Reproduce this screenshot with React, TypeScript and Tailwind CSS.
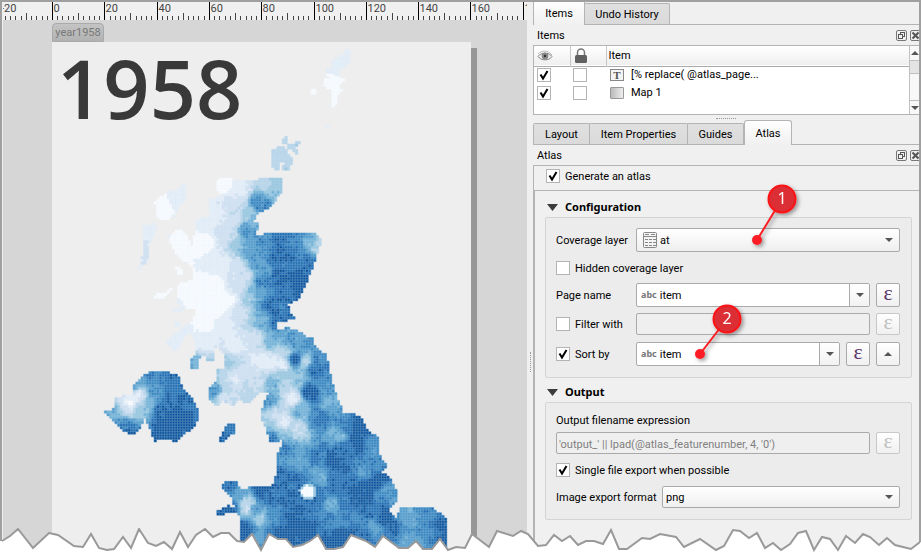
import React from "react";

const BLUES = ["#f7fbff", "#e4eff9", "#d3e3f3", "#bad6eb", "#9ac8e0", "#73b2d8", "#529dcc", "#3585bf", "#1d6cb1", "#08519c"];

// Outline of the cells in each class
const GRID = ["#f5f9fd", "#e2edf7", "#d0e0f0", "#bed8eb", "#a9cfe4", "#8fc0de", "#7ab1d6", "#6ba4d0", "#5f97c8", "#5488bb"];

// Coastlines of the map, as x,y pairs in layout pixels
const COASTS = [
  "218,180 227,177 233,180 252,181 265,178 283,177 283,192 270,207 258,213 253,222 259,223 257,232 252,237 260,236 268,232 295,232 313,232 322,240 318,253 313,267 308,280 298,300 288,305 290,312 295,318 278,323 275,331 287,328 297,330 305,336 312,337 315,347 327,355 330,373 335,390 343,412 360,416 368,430 379,438 378,453 388,467 380,472 390,477 397,493 397,500 388,510 396,517 401,507 432,507 445,517 448,527 447,552 238,552 241,520 238,512 228,512 222,517 218,515 218,511 228,506 236,507 232,503 232,497 222,487 227,480 237,481 237,485 245,490 252,486 272,487 277,473 278,453 283,443 280,438 277,443 270,442 265,427 260,417 265,400 270,393 262,392 248,403 238,400 233,407 222,400 217,407 208,397 208,388 217,380 218,370 225,367 223,352 213,346 213,361 206,361 204,352 199,360 199,368 190,370 190,363 195,354 195,340 190,333 183,328 192,322 197,310 180,310 177,293 178,285 192,280 192,268 186,262 177,255 168,237 177,230 183,230 192,245 195,233 197,220 212,215 208,208 210,198 217,198 223,195 218,190",
  "155,202 167,192 178,190 185,182 186,198 178,208 173,217 163,221 157,215",
  "152,223 157,227 150,243 148,262 142,267 135,278 142,263 143,227",
  "153,295 165,293 172,287 172,290 162,299 153,299",
  "173,266 181,266 183,276 178,273",
  "167,343 175,333 190,327 185,337 178,350 174,352",
  "171,309 182,309 182,312 174,312",
  "174,322 180,322 180,326 174,326",
  "273,149 285,146 287,154 294,158 289,171 282,171 283,166 286,162 279,162 280,171 275,171 271,162",
  "284,135 288,138 288,144 283,143",
  "288,145 296,142 301,139 301,142 294,148 288,149",
  "293,149 299,149 299,154 294,153",
  "346,49 349,49 349,62 343,69 339,67 340,79 346,80 339,84 343,92 338,94 337,104 333,107 333,91 323,86 323,78 330,79 325,71 326,67 332,67 330,63 338,57 343,55",
  "312,90 315,90 315,93 312,93",
  "326,125 328,125 328,128 326,128",
  "116,398 132,394 132,387 147,373 162,370 178,375 185,392 192,398 197,407 199,416 195,427 183,435 175,443 167,438 155,441 148,425 145,417 138,432 132,435 122,430 105,412 116,408",
  "228,423 236,423 235,432 223,443 218,443 221,435",
].map((line) => line.split(" ").map((p) => p.split(",").map(Number)));

// Measured values: x, y, class (0 light to 9 dark)
const SAMPLES = (
  "333,90,0 342,62,1 285,155,3 225,185,0 240,190,1 265,182,3 275,188,4 260,203,7 235,203,2 215,215,1 235,220,2 250,215,4 247,230,6 230,235,2 238,245,4 205,245,0 182,245,0 215,262,1 235,265,2 250,250,6 265,242,6.5 280,238,8 295,240,7 310,240,5 318,245,3 275,255,8 290,260,8 305,265,8 258,265,6 245,275,2 262,280,7 280,280,8 298,283,9 260,295,5 250,300,4 270,305,8 288,295,8 205,285,0 220,285,0 190,298,0 215,310,0 235,285,2 240,312,2 225,325,1 205,325,0 262,318,5 275,320,8 288,318,8 205,340,1 196,367,5 235,345,1 255,340,2 272,340,5 290,338,5.5 300,345,6 275,362,1 262,360,1 245,375,2 228,364,4 230,385,3 235,380,1 212,390,6 225,400,2 248,390,3 255,385,2 285,352,3 282,375,4 295,360,9 305,362,3 283,365,1 293,398,1 282,385,3 300,380,4 315,370,8 310,392,9 325,385,6.5 330,402,5 300,410,5 320,418,8 283,422,1 275,415,2.5 268,400,6 270,425,4 298,430,2.5 285,435,4 273,440,8 275,385,5 338,435,4.5 345,425,7 360,425,9 358,443,9 370,445,6.5 333,460,9 320,455,7.5 300,455,6 285,460,6 365,470,6 380,465,7 345,450,7.5 290,480,8 320,478,5 335,485,8 360,490,9 378,480,9 387,492,6.5 345,505,8 332,506,5 370,510,8 290,510,8.5 300,530,9 330,520,7 350,515,7 340,540,9 375,527,5.5 385,520,9 395,530,8 408,518,5.5 425,515,7 430,530,7 443,525,9 410,540,5.5 360,535,8 " +
  "230,485,8 245,502,3 247,507,2 240,495,6 262,490,8.5 275,500,8 262,518,4 255,510,6 275,515,7 245,530,9 260,540,6 280,535,9 232,508,9 270,525,7 285,450,7 283,475,8 303,500,8 298,491,8 316,493,8 310,335,7 322,358,7 230,300,0 225,265,1 " +
  "130,403,0 138,395,1 125,395,2 127,410,2 115,412,5 140,410,4 125,425,7 135,385,5 150,375,7 170,378,8 155,392,6.5 150,405,5 175,395,8 160,410,8.5 175,415,9 165,430,9 190,405,8 185,425,9 128,432,9 228,430,8 " +
  "165,205,0 182,190,1 175,200,1 150,235,1 145,250,2 137,275,1 160,295,0 177,270,0 178,340,1 177,310,1"
)
  .split(" ")
  .map((p) => p.split(",").map(Number));

const CELL = 2.615;

function inside(poly: number[][], x: number, y: number) {
  let hit = false;
  for (let i = 0, j = poly.length - 1; i < poly.length; j = i++) {
    const [ax, ay] = poly[i];
    const [bx, by] = poly[j];
    if (ay > y !== by > y && x < ((bx - ax) * (y - ay)) / (by - ay) + ax) hit = !hit;
  }
  return hit;
}

function noise(a: number, b: number) {
  const n = Math.sin(a * 127.1 + b * 311.7) * 43758.5453;
  return n - Math.floor(n);
}

function buildCells() {
  const paths = BLUES.map(() => "");
  for (let row = 0; row < 196; row++) {
    for (let col = 0; col < 160; col++) {
      const x = 52 + col * CELL;
      const y = 42 + row * CELL;
      const cx = x + CELL / 2;
      const cy = y + CELL / 2;
      if (!COASTS.some((c) => inside(c, cx, cy))) continue;
      let sum = 0;
      let total = 0;
      for (const [sx, sy, v] of SAMPLES) {
        const d = (sx - cx) ** 2 + (sy - cy) ** 2 + 12;
        const w = 1 / (d * d);
        sum += w * v;
        total += w;
      }
      let value = sum / total;
      const patch = noise(Math.floor(col / 3), Math.floor(row / 3)) - 0.5;
      if (value > 4) value += 0.3 + patch * 1.1;
      value += (noise(col, row) - 0.5) * (value > 1.2 ? 1 : 0.3);
      const city = Math.hypot(cx - 307.5, cy - 491.5);
      if (city < 6.5) value = 0;
      else if (city < 8.5) value = 4;
      const k = Math.max(0, Math.min(9, Math.round(value)));
      paths[k] += `M${x.toFixed(2)} ${y.toFixed(2)}h${CELL}v${CELL}h-${CELL}z`;
    }
  }
  return paths;
}

const CELLS = buildCells();

const TORN =
  "2,541 10,536 18,529 33,548 49,533 58,535 74,546 83,547 91,534 99,548 107,550 114,549 123,537 131,548 139,529 148,543 156,546 164,542 172,549 180,532 188,547 196,535 205,529 213,537 221,533 229,533 237,541 244,542 252,534 261,550 269,534 278,539 286,539 293,547 302,545 310,541 318,535 326,549 334,549 343,547 351,535 366,541 375,547 383,536 399,548 408,548 416,541 423,549 432,549 440,539 448,550 456,547 465,548 472,534 489,547 497,531 513,536 521,531 528,534 538,546 546,545 554,535 562,541 570,536 578,545 586,541 594,541 603,544 611,530 619,549 627,549 642,538 650,539 660,534 676,537 684,547 700,539 716,550 724,546 733,530 740,531 749,538 757,533 765,548 773,543 781,550 790,544 798,533 806,531 814,550 822,537 830,539 838,550 846,536 855,543 863,534 870,537 879,545 887,538 895,545 903,547 911,549 920,542";

function TornEdge() {
  return (
    <svg className="pointer-events-none absolute bottom-0 left-0 h-[24px] w-full" viewBox="0 528 921 24" preserveAspectRatio="none" aria-hidden="true">
      <polygon points={`0,541 ${TORN} 921,542 921,553 0,553`} fill="#fff" />
      <polyline points={TORN} fill="none" stroke="#999" strokeWidth="2" />
    </svg>
  );
}

function Ruler() {
  const ticks: React.ReactNode[] = [];
  const last = (window.innerWidth - 443) / CELL;
  for (let u = -18; u <= last; u += 2) {
    const x = Math.round(49 + u * CELL) + 0.5;
    const top = u % 20 === 0 ? 0 : u % 10 === 0 ? 11 : 14;
    ticks.push(<line key={u} x1={x} x2={x} y1={top} y2={18} stroke={top === 0 ? "#000" : "#444"} />);
    if (u % 20 === 0) {
      ticks.push(
        <text key={`t${u}`} x={x + 1} y={10} fill="#444">
          {u}
        </text>
      );
    }
  }
  return (
    <svg className="h-[18px] w-full shrink-0 bg-[#f0f0f0] text-[11px]" aria-label="Horizontal ruler">
      <text x={-2} y={10} fill="#444">
        -20
      </text>
      {ticks}
    </svg>
  );
}

function LayoutCanvas() {
  return (
    <section className="flex min-w-0 flex-1 flex-col overflow-hidden bg-[#d6d6d6]">
      <Ruler />
      <div className="flex-1 pt-[3px] pl-[49px]">
        <div className="flex h-[19px] w-[52px] items-center justify-center rounded-t border border-[#aaa] bg-linear-to-b from-[#c4c4c4] to-[#b2b2b2] text-[11px] text-[#777]">year1958</div>
        <div className="relative h-[520px] w-[419px] bg-[#eee] shadow-[6px_6px_0_#979797]">
          <svg className="absolute inset-0 h-[510px] w-full" viewBox="52 42 419 510" role="img" aria-label="Map 1">
            {CELLS.map((d, i) => (
              <path key={i} d={d} fill={BLUES[i]} stroke={GRID[i]} strokeWidth={0.5} />
            ))}
          </svg>
          <h1 className="relative pt-px pl-[5px] font-['Open_Sans',sans-serif] text-[81px] leading-[90px] font-semibold text-[#393939]">1958</h1>
        </div>
      </div>
    </section>
  );
}

function DockTab({ label, active, width }: { label: string; active?: boolean; width: string }) {
  return (
    <button
      role="tab"
      aria-selected={!!active}
      className={`${width} whitespace-nowrap border border-b-0 border-[#b4b4b4] pt-px text-center ${
        active ? "relative -mb-px h-[25px] rounded-t-[3px] bg-linear-to-b from-white to-[#f0f0f0]" : "-ml-px h-[21px] rounded-t-[2px] bg-linear-to-b from-[#e0e0e0] to-[#dadada]"
      }`}
    >
      {label}
    </button>
  );
}

function DockTitle({ title }: { title: string }) {
  return (
    <div className="flex h-5 items-center justify-between pl-1">
      <h2 className="pt-[2px]">{title}</h2>
      <div className="-mr-[2px] flex gap-[3px]">
        <button aria-label="Float" className="flex size-[11px] items-center justify-center rounded-[2px] border border-[#777]">
          <svg className="size-[9px]" viewBox="0 0 9 9" fill="none" stroke="#555">
            <rect x="3.5" y="1.5" width="4" height="4" />
            <rect x="1.5" y="3.5" width="4" height="4" fill="#f0f0f0" />
          </svg>
        </button>
        <button aria-label="Close" className="flex size-[11px] items-center justify-center rounded-[2px] border border-[#777]">
          <svg className="size-[9px]" viewBox="0 0 9 9" stroke="#555" strokeWidth="2">
            <path d="M1.5 1.5l6 6M7.5 1.5l-6 6" />
          </svg>
        </button>
      </div>
    </div>
  );
}

function Tick({ label, id, checked, hideLabel }: { label: string; id: string; checked?: boolean; hideLabel?: boolean }) {
  return (
    <div className="flex items-center gap-[5px]">
      <span className="grid size-[14px] shrink-0">
        <input
          id={id}
          type="checkbox"
          defaultChecked={checked}
          aria-label={hideLabel ? label : undefined}
          className="peer col-start-1 row-start-1 size-[14px] appearance-none border border-[#b4b4b4] bg-white"
        />
        <svg className="pointer-events-none invisible col-start-1 row-start-1 size-[14px] peer-checked:visible" viewBox="0 0 14 14" fill="none" stroke="#000" strokeWidth="2">
          <path d="M3.5 6.5L6 10.5L10.5 3" />
        </svg>
      </span>
      {!hideLabel && (
        <label htmlFor={id} className="pt-[2px]">
          {label}
        </label>
      )}
    </div>
  );
}

function Arrow({ up }: { up?: boolean }) {
  return (
    <svg className="h-1 w-[8px]" viewBox="0 0 8 4" aria-hidden="true">
      <path d={up ? "M0 4L4 0L8 4z" : "M0 0L4 4L8 0z"} fill="#555" />
    </svg>
  );
}

function ExpressionButton({ disabled }: { disabled?: boolean }) {
  return (
    <button
      aria-label="Expression"
      disabled={disabled}
      className="flex h-6 w-6 shrink-0 items-center justify-center rounded-[2px] border border-[#aaa] bg-linear-to-b from-white to-[#f0f0f0] font-['Liberation_Serif',serif] text-[22px] leading-[20px] text-[#5a3768] disabled:h-[22px] disabled:border-[#c8c8c8] disabled:text-[#c0c0c0]"
    >
      <span className="-mt-1">ε</span>
    </button>
  );
}

function FieldCombo({ id, value }: { id: string; value: string }) {
  return (
    <div className="flex h-6 min-w-0 flex-1 items-center overflow-hidden rounded-[2px] border border-[#aaa] bg-white">
      <span className="pl-1 font-['Noto_Sans',sans-serif] text-[9px] leading-4 font-bold text-[#777]" aria-hidden="true">
        abc
      </span>
      <input id={id} defaultValue={value} className="min-w-0 flex-1 pt-[2px] pl-[3px] outline-none" />
      <button aria-label="Show fields" className="flex h-full w-5 items-center justify-center border-l border-[#aaa] bg-linear-to-b from-white to-[#f2f2f2]">
        <Arrow />
      </button>
    </div>
  );
}

function GroupTitle({ title }: { title: string }) {
  return (
    <h3 className="flex h-5 items-center gap-[7px] pl-3 font-['Noto_Sans',sans-serif] font-bold">
      <svg className="h-[7px] w-[11px]" viewBox="0 0 11 7" aria-hidden="true">
        <path d="M0 0h11L5.500 7z" fill="#3c3c3c" />
      </svg>
      {title}
    </h3>
  );
}

function ItemRow({ name, icon, id }: { name: string; icon: React.ReactNode; id: string }) {
  return (
    <tr className="h-[18px]">
      <td className="pl-[3px]">
        <Tick id={`${id}-visible`} label={`${name} visible`} checked hideLabel />
      </td>
      <td className="pl-[3px]">
        <Tick id={`${id}-locked`} label={`${name} locked`} hideLabel />
      </td>
      <td className="pl-[4px]">
        <span className="flex items-center gap-[7px]">
          {icon}
          {name}
        </span>
      </td>
    </tr>
  );
}

function ItemsPanel() {
  return (
    <div className="flex h-[70px] shrink-0 border-y border-l border-[#b4b4b4] bg-white">
      <div className="flex-1">
        <table className="w-full table-fixed border-collapse text-left">
          <thead>
            <tr className="h-[20px] border-b border-[#aaa] bg-linear-to-b from-white to-[#efefef]">
              <th className="w-9 border-r border-[#c8c8c8] pl-[3px]">
                <svg className="h-3 w-4" viewBox="0 0 16 12" fill="none" stroke="#888" aria-label="Visible">
                  <path d="M1 6.500C4 2 12 2 15 6.500C12 11 4 11 1 6.500z" fill="#eee" />
                  <path d="M1 4C5 0 11 0 15 5" stroke="#bbb" />
                  <circle cx="8" cy="6" r="3" fill="#888" />
                  <circle cx="8" cy="6" r="1.200" fill="#333" stroke="none" />
                </svg>
              </th>
              <th className="w-9 border-r border-[#c8c8c8] pl-1">
                <svg className="h-[15px] w-3" viewBox="0 0 12 15" aria-label="Locked">
                  <path d="M2.500 8V4.500a3.500 3.500 0 0 1 7 0V8" fill="none" stroke="#777" strokeWidth="1.500" />
                  <rect y="7" width="12" height="8" rx="1.500" fill="#606060" />
                </svg>
              </th>
              <th className="pl-[2px] font-normal">Item</th>
            </tr>
          </thead>
          <tbody>
            <ItemRow
              id="label-item"
              name="[% replace( @atlas_page..."
              icon={<span className="flex h-3 w-[14px] items-center justify-center border border-[#888] bg-[#f4f4f4] font-['Liberation_Serif',serif] text-[11px] leading-3 font-bold text-[#555]">T</span>}
            />
            <ItemRow id="map-item" name="Map 1" icon={<span className="h-3 w-[14px] rounded-[1px] border border-[#999] bg-linear-to-r from-[#bbb] to-[#eee]" />} />
          </tbody>
        </table>
      </div>
      <div className="flex w-[10px] flex-col border-l border-[#c0c0c0] bg-[#f8f8f8]">
        <button aria-label="Scroll up" className="flex h-[14px] items-center justify-center">
          <Arrow up />
        </button>
        <div className="h-[14px] border-y border-[#c0c0c0] bg-[#e4e4e4]" />
        <div className="flex-1" />
        <button aria-label="Scroll down" className="flex h-[14px] items-center justify-center border-t border-[#c0c0c0]">
          <Arrow />
        </button>
      </div>
    </div>
  );
}

function Configuration() {
  return (
    <div className="mr-[7px] ml-[10px] h-[161px] rounded-[2px] border border-[#d4d4d4] bg-[#ececec] pt-[10px] pr-[11px] pl-[10px]">
      <div className="flex items-center">
        <label htmlFor="coverage" className="w-20 pt-[2px]">
          Coverage layer
        </label>
        <div className="grid flex-1 items-center">
          <select id="coverage" className="col-start-1 row-start-1 h-6 w-full appearance-none rounded-[2px] border border-[#aaa] bg-linear-to-b from-white to-[#efefef] pt-[2px] pl-[23px]">
            <option>at</option>
          </select>
          <svg className="pointer-events-none col-start-1 row-start-1 ml-[7px] h-4 w-[14px]" viewBox="0 0 14 16" fill="none" stroke="#888" aria-hidden="true">
            <rect x=".5" y=".5" width="13" height="15" rx="1" fill="#f4f4f4" />
            <path d="M.5 4.500h13M2 2.500h4M8 2.500h4M2 7.500h3M6 7.500h3M10 7.500h3M2 10.500h3M6 10.500h3M10 10.500h3M2 13.500h3M6 13.500h3M10 13.500h3" />
          </svg>
          <span className="pointer-events-none col-start-1 row-start-1 mr-[7px] justify-self-end leading-none">
            <Arrow />
          </span>
        </div>
      </div>
      <div className="flex h-[31px] items-center">
        <Tick id="hidden" label="Hidden coverage layer" />
      </div>
      <div className="flex items-center">
        <label htmlFor="page-name" className="w-20 pt-[2px]">
          Page name
        </label>
        <div className="flex flex-1 gap-[6px]">
          <FieldCombo id="page-name" value="item" />
          <ExpressionButton />
        </div>
      </div>
      <div className="mt-[6px] flex items-center">
        <div className="w-20">
          <Tick id="filter" label="Filter with" />
        </div>
        <div className="flex flex-1 gap-[6px]">
          <input aria-label="Filter expression" disabled className="h-[22px] min-w-0 flex-1 rounded-[2px] border border-[#aaa] bg-[#efefef]" />
          <ExpressionButton disabled />
        </div>
      </div>
      <div className="mt-[7px] flex items-center">
        <div className="w-20">
          <Tick id="sort" label="Sort by" checked />
        </div>
        <div className="flex flex-1 gap-[6px]">
          <FieldCombo id="sort-field" value="item" />
          <ExpressionButton />
          <button aria-label="Sort direction" className="flex h-6 w-6 items-center justify-center rounded-[2px] border border-[#aaa] bg-linear-to-b from-white to-[#f0f0f0]">
            <Arrow up />
          </button>
        </div>
      </div>
    </div>
  );
}

function Output() {
  return (
    <div className="mr-[7px] ml-[10px] h-[118px] rounded-[2px] border border-[#d4d4d4] bg-[#ececec] pt-[9px] pr-[11px] pl-[10px]">
      <label htmlFor="filename" className="block pt-px pb-[3px]">
        Output filename expression
      </label>
      <div className="flex gap-[6px]">
        <input
          id="filename"
          disabled
          defaultValue="'output_' || lpad(@atlas_featurenumber, 4, '0')"
          className="h-[22px] min-w-0 flex-1 rounded-[2px] border border-[#aaa] bg-[#efefef] px-[2px] pt-[2px] text-[#7f7f7f]"
        />
        <ExpressionButton disabled />
      </div>
      <div className="flex h-8 items-center">
        <Tick id="single" label="Single file export when possible" checked />
      </div>
      <div className="flex items-center">
        <label htmlFor="format" className="w-[106px] pt-[2px] whitespace-nowrap">
          Image export format
        </label>
        <div className="grid flex-1 items-center">
          <select id="format" className="col-start-1 row-start-1 h-[22px] w-full appearance-none rounded-[2px] border border-[#aaa] bg-linear-to-b from-white to-[#efefef] pt-[2px] pl-[3px]">
            <option>png</option>
          </select>
          <span className="pointer-events-none col-start-1 row-start-1 mr-[7px] justify-self-end leading-none">
            <Arrow />
          </span>
        </div>
      </div>
    </div>
  );
}

function Callouts() {
  const marks = [
    { n: 1, x: 249, y: 197, dx: 224, dy: 238 },
    { n: 2, x: 194, y: 317, dx: 167, dy: 352 },
  ];
  return (
    <svg className="pointer-events-none absolute top-0 left-0 h-[400px] w-full font-['Noto_Sans',sans-serif] text-[16px]" aria-hidden="true">
      <defs>
        <filter id="soft" x="-50%" y="-50%" width="200%" height="200%">
          <feDropShadow dx="2" dy="2" stdDeviation="2" floodOpacity="0.4" />
        </filter>
      </defs>
      {marks.map((m) => (
        <g key={m.n} filter="url(#soft)">
          <line x1={m.x} y1={m.y} x2={m.dx} y2={m.dy} stroke="#f91c24" strokeWidth="2" />
          <circle cx={m.dx} cy={m.dy} r="5" fill="#fb1e26" />
          <circle cx={m.x} cy={m.y} r="13.500" fill="#dc2f34" stroke="#fb1218" strokeWidth="2" />
          <text x={m.x} y={m.y + 5} textAnchor="middle" fill="#fff">
            {m.n}
          </text>
        </g>
      ))}
    </svg>
  );
}

export default function App() {
  return (
    <div className="relative h-screen min-h-[552px] overflow-hidden bg-white">
      <main className="flex h-full overflow-hidden border-2 border-[#a0a0a0] bg-[#f0f0f0] pl-px font-['Roboto',sans-serif] text-[11px] leading-4 text-black">
        <LayoutCanvas />
        <div className="flex w-[6px] shrink-0 items-center justify-center pt-[172px]">
          <span className="h-5 border-l border-dotted border-[#999]" />
        </div>
        <aside className="relative flex w-[386px] shrink-0 flex-col">
          <div role="tablist" className="flex h-[23px] items-end border-b border-[#b4b4b4]">
            <DockTab label="Items" active width="w-[52px]" />
            <DockTab label="Undo History" width="w-[86px]" />
          </div>
          <DockTitle title="Items" />
          <ItemsPanel />
          <div className="flex h-[6px] items-center justify-center">
            <span className="w-5 border-t border-dotted border-[#999]" />
          </div>
          <div role="tablist" className="flex h-6 items-end border-b border-[#b4b4b4] pl-px">
            <DockTab label="Layout" width="w-[57px]" />
            <DockTab label="Item Properties" width="w-[99px]" />
            <DockTab label="Guides" width="w-[57px]" />
            <DockTab label="Atlas" active width="w-[48px]" />
          </div>
          <DockTitle title="Atlas" />
          <div className="flex flex-1 flex-col border-t border-l border-[#b4b4b4]">
            <div className="flex h-6 items-center pb-1 pl-3">
              <Tick id="generate" label="Generate an atlas" checked />
            </div>
            <div className="flex-1 border-t border-l border-[#b4b4b4] pt-[6px]">
              <GroupTitle title="Configuration" />
              <Configuration />
              <div className="h-1" />
              <GroupTitle title="Output" />
              <Output />
            </div>
          </div>
          <Callouts />
        </aside>
      </main>
      <TornEdge />
    </div>
  );
}
